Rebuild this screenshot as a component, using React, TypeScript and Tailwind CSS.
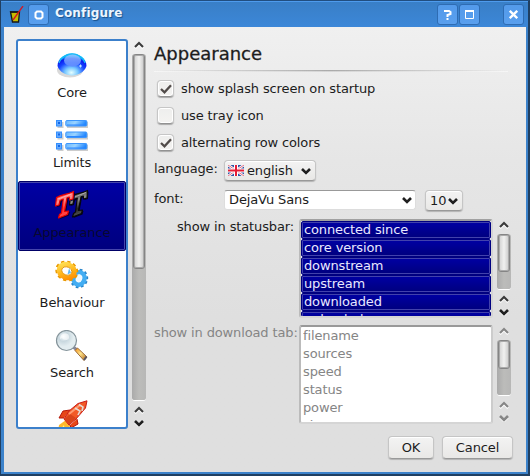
import React from 'react';

function Chevron({ up = false, dim = false }: { up?: boolean; dim?: boolean }) {
  return (
    <svg width="12" height="8" viewBox="0 0 12 8" fill="none" className="shrink-0">
      <path d={up ? 'M2 7.2L6 3.2L10 7.2' : 'M2 3.2L6 7.2L10 3.2'} stroke="#fff" strokeWidth="2.2" />
      <path d={up ? 'M2 6L6 2L10 6' : 'M2 2L6 6L10 2'} stroke={dim ? '#868686' : up ? '#3b3b3b' : '#202020'} strokeWidth={up ? 2.1 : 2.6} />
    </svg>
  );
}

function CoreIcon() {
  return (
    <svg width="32" height="32" viewBox="0 0 32 32">
      <defs>
        <radialGradient id="orb" cx=".48" cy=".87" r=".75">
          <stop offset="0" stopColor="#e6ffff" />
          <stop offset=".3" stopColor="#78c8ff" />
          <stop offset=".62" stopColor="#1747ff" />
          <stop offset=".85" stopColor="#0a1cf0" />
          <stop offset="1" stopColor="#00bfff" />
        </radialGradient>
        <linearGradient id="gloss" x2="0" y2="1">
          <stop stopColor="#9ac4ff" />
          <stop offset="1" stopColor="#5f88ff" />
        </linearGradient>
      </defs>
      <ellipse cx="14" cy="20" rx="13" ry="7.5" fill="#d9d9d9" />
      <path d="M1.5 16C1.5 8 9 3.4 16 3.4S30.500 8 30.500 16C28.500 22 22 25.500 16 25.500S3.500 22 1.500 16Z" fill="url(#orb)" />
      <path d="M3 13C5 7 11 4 16 4S27 7 29 13" fill="none" stroke="#18b9f6" strokeWidth="1.3" />
      <ellipse cx="16.500" cy="10.500" rx="8.500" ry="6" fill="url(#gloss)" opacity=".85" />
      <path d="M24.500 14.500v3M23 16h3" stroke="#bfe7ff" />
    </svg>
  );
}

function LimitsIcon() {
  return (
    <svg width="32" height="32" viewBox="0 0 32 32">
      <defs>
        <linearGradient id="bar" x2="1" y2=".2">
          <stop stopColor="#68b6ff" />
          <stop offset=".5" stopColor="#9bd4ff" />
          <stop offset="1" stopColor="#2388ff" />
        </linearGradient>
      </defs>
      {[1, 12.5, 24].map((y) => (
        <g key={y}>
          <rect x="1.5" y={y + 1} width="6" height="6" fill="#ccc" />
          <rect x="11" y={y + 1} width="21" height="6" fill="#ccc" />
          <rect x=".5" y={y - 0.5} width="5" height="5.5" fill="#64aaff" stroke="#338fff" />
          <rect x="2" y={y + 1} width="2" height="2" fill="#1268e8" />
          <rect x="9.8" y={y - 0.5} width="21" height="5.5" rx="1" fill="url(#bar)" stroke="#3c96fc" />
          <path d={`M11 ${y + 4}h18`} stroke="#2c87ff" />
        </g>
      ))}
    </svg>
  );
}

const letterT = 'M1 6.500C6 3.500 12 3.500 18 0.500L17.500 8L14 9L13.800 6L11.500 6.800L9 20.500L13 20L12 23.500L3 27L4 23.500L6 22L7.800 8L4.500 9.500L3.500 14L0 15Z';

function FontIcon() {
  return (
    <svg width="34" height="32" viewBox="0 0 34 32" className="overflow-visible">
      <defs>
        <linearGradient id="redT" x2=".3" y2="1">
          <stop stopColor="#f00" />
          <stop offset=".4" stopColor="#ff8c8c" />
          <stop offset=".7" stopColor="#f33" />
          <stop offset="1" stopColor="#ff4a4a" />
        </linearGradient>
        <linearGradient id="blackT" x2=".3" y2="1">
          <stop stopColor="#151515" />
          <stop offset=".45" stopColor="#8a8a8a" />
          <stop offset=".75" stopColor="#252525" />
          <stop offset="1" stopColor="#555" />
        </linearGradient>
      </defs>
      <g strokeLinejoin="round">
        <path transform="translate(15.500 1)" d={letterT} fill="#000020" />
        <path transform="translate(14.500 0)" d={letterT} fill="url(#blackT)" stroke="#080808" strokeWidth="1.2" />
        <path d="M17 8L31 2.500" stroke="#aaa" strokeWidth="1" />
        <path transform="translate(2 2)" d={letterT} fill="#000038" />
        <path transform="translate(.500 1)" d={letterT} fill="url(#redT)" stroke="#e80000" strokeWidth="1.2" />
        <path d="M3 9L16.500 4" stroke="#ffaaaa" strokeWidth="1.3" />
      </g>
    </svg>
  );
}

function GearIcon() {
  return (
    <svg width="34" height="32" viewBox="0 0 34 32">
      <defs>
        <linearGradient id="gold" x2="1" y2="1">
          <stop stopColor="#ffe258" />
          <stop offset=".55" stopColor="#ffb51b" />
          <stop offset="1" stopColor="#ff8a00" />
        </linearGradient>
      </defs>
      <g transform="translate(24 18.500) rotate(20)">
        <ellipse rx="7.600" ry="8.300" fill="none" stroke="#2885cb" strokeWidth="3" strokeDasharray="2.600 2.400" />
        <ellipse rx="5.500" ry="6.200" fill="none" stroke="#43adf2" strokeWidth="4.500" />
      </g>
      <ellipse cx="24" cy="18" rx="2.800" ry="3.800" fill="#eef8ff" />
      <g transform="translate(11.800 11) rotate(22)">
        <ellipse rx="10.200" ry="8.700" fill="none" stroke="#e99800" strokeWidth="3" strokeDasharray="3.200 2.700" />
        <ellipse rx="7.800" ry="6.500" fill="#fff" stroke="url(#gold)" strokeWidth="5" />
        <ellipse rx="5.200" ry="4" fill="#fff" stroke="#dc8b00" strokeWidth=".8" />
        <path d="M1 -3.500L4.500 0L2 3Z" fill="#5bb8f5" />
      </g>
    </svg>
  );
}

function SearchIcon() {
  return (
    <svg width="34" height="32" viewBox="0 0 34 32">
      <defs>
        <radialGradient id="lens" cx=".35" cy=".3">
          <stop stopColor="#fafdff" />
          <stop offset=".5" stopColor="#c9d8df" />
          <stop offset="1" stopColor="#e3edf0" />
        </radialGradient>
        <linearGradient id="handle" x2="1" y2="1">
          <stop stopColor="#f28c12" />
          <stop offset=".45" stopColor="#ffe38a" />
          <stop offset="1" stopColor="#a95c10" />
        </linearGradient>
      </defs>
      <path d="M17 16L22 20" stroke="#889" strokeWidth="3" />
      <circle cx="11.500" cy="10.500" r="10" fill="url(#lens)" stroke="#84939a" strokeWidth="1.2" />
      <path d="M5 9C5 3 13 2 14 6C15 12 8 10 7 8" fill="#fff" opacity=".6" />
      <path d="M22.500 18L32 27L29 30.500L20 20.500Z" fill="url(#handle)" stroke="#9c6b39" />
      <path d="M31.500 26.500L29 30" stroke="#556" strokeWidth="2" />
    </svg>
  );
}

function RocketIcon() {
  return (
    <svg width="32" height="32" viewBox="0 0 32 32">
      <path d="M10 20L3 25L2 32H13L14 25Z" fill="#ffb92c" />
      <path d="M8 25L4 30V32H9Z" fill="#ffff82" />
      <path d="M14 10L7 11L3 18L8 18M21 19L22 24L15 28L14 25" fill="#e74718" stroke="#b5180b" />
      <path d="M8 19L13 11L22 3.500L31 .800L29.500 8L20 19L13 25Z" fill="#f25a27" stroke="#c91d18" />
      <path d="M8.500 19L14 14L20 18L13 24.500Z" fill="#d9441a" />
      <path d="M13 14L24 5" stroke="#ff9a71" strokeWidth="2" />
      <path d="M19 8L24 11L22 15M23 4.500L27 7L26 11" fill="none" stroke="#e4d9d2" strokeWidth="1.6" />
    </svg>
  );
}

function SideItem({ icon, label, selected = false }: { icon: React.ReactNode; label?: string; selected?: boolean }) {
  return (
    <div className={`flex h-[70px] shrink-0 flex-col items-center rounded-[2px] ${selected ? 'border border-[#000066] bg-linear-to-b from-[#0000a4] to-[#00007e] pt-2 text-[#080830] shadow-[inset_0_0_0_1px_#4646ac]' : 'pt-[9px]'}`}>
      <div className="flex h-8 w-[34px] justify-center">{icon}</div>
      {label && <span className="mt-[3px] leading-4">{label}</span>}
    </div>
  );
}

function Thumb({ className }: { className: string }) {
  return <div className={`mx-px shrink-0 rounded-[3px] border border-[#858585] bg-linear-to-r from-[#d0d0d0] via-[#f1f1f0] to-[#c8c8c8] shadow-[inset_0_0_0_1px_#aaa] ${className}`} />;
}

function Scroll({ thumb, dim = false, className }: { thumb: string; dim?: boolean; className: string }) {
  return (
    <div className={`flex w-[14px] shrink-0 flex-col items-center ${className}`}>
      <Chevron up dim={dim} />
      <div className="mt-[5px] w-full flex-1 rounded-[3px] border-b border-white bg-linear-to-r from-[#aaa] via-[#bcbcba] to-[#b7b7b6]">
        <Thumb className={thumb} />
      </div>
      <div className="mt-[5px] flex flex-col gap-[5px]">
        <Chevron up dim={dim} />
        <Chevron dim={dim} />
      </div>
    </div>
  );
}

function Check({ label, checked = false }: { label: string; checked?: boolean }) {
  return (
    <div className="flex h-[27px] items-center">
      <div className="ml-[3px] flex h-[17px] w-[17px] items-center justify-center rounded-[4px] border border-[#c6c6c6] border-b-[#929292] bg-linear-to-b from-[#eeeeed] to-[#f4f3f1] shadow-[inset_0_0_0_1px_#fff,0_1px_1px_#aaa]">
        {checked && (
          <svg width="14" height="14" viewBox="0 0 14 14" fill="none">
            <path d="M2 7L5.500 10.300L12 3.300" stroke="#514b49" strokeWidth="2.3" />
          </svg>
        )}
      </div>
      <span className="ml-[7px] leading-4">{label}</span>
    </div>
  );
}

const raised = 'rounded-[4px] border border-[#c5c5c5] border-b-[#999] bg-linear-to-b from-[#f3f3f3] to-[#e9e8e6] shadow-[inset_0_1px_0_#fff,0_1px_1px_#b3b3b3]';
const titleButton = 'flex h-[21px] w-[21px] items-center justify-center rounded-[3px] border border-[#2e6cb3] bg-linear-to-b from-[#539aea] to-[#599fee] text-white';

export default function App() {
  return (
    <div className="flex h-[476px] w-[530px] flex-col overflow-hidden border border-r-2 border-b-2 border-[#203f61] border-t-[#214e80] bg-[#3c82ca] font-['DejaVu_Sans','Liberation_Sans',sans-serif] text-[13px] tracking-[-0.13px] text-[#1c1c1c]">
      <header className="flex h-[26px] shrink-0 items-start border-t border-[#4e9bed] bg-linear-to-b from-[#397fc7] to-[#3c87d8] pt-[2px]">
        <svg className="mt-[2px] ml-[8px]" width="15" height="18" viewBox="0 0 15 18">
          <path d="M1.500 6H10.500L9.500 16H3.500Z" fill="#c5bb00" stroke="#171717" strokeWidth="1.3" />
          <path d="M1 6h10" stroke="#171717" strokeWidth="1.3" />
          <path d="M4 14L14 0" stroke="#d51822" strokeWidth="1.3" />
        </svg>
        <div className={`${titleButton} ml-[4px]`}>
          <svg width="10" height="10" viewBox="0 0 10 10" fill="none"><path d="M3 1.500H7L8.500 3V7L7 8.500H3L1.500 7V3Z" stroke="#fff" strokeWidth="2" /></svg>
        </div>
        <span className="ml-[6px] text-[12px] leading-[18px] font-bold tracking-[0.15px] text-[#edf5ff] [text-shadow:1px_1px_1px_#174f89]">Configure</span>
        <div className="mr-[4px] ml-auto flex">
          <div className={titleButton}>
            <svg width="9" height="11" viewBox="0 0 9 11" fill="none"><path d="M1 2H6L7.500 3V5L4.500 6V8M4.500 9V11" stroke="#fff" strokeWidth="2" /></svg>
          </div>
          <div className={`${titleButton} ml-px`}>
            <svg width="9" height="9" viewBox="0 0 9 9"><path d="M.500 1H8.500V8.500H.500Z" fill="none" stroke="#fff" /><path d="M0 1h9" stroke="#fff" strokeWidth="2" /></svg>
          </div>
          <div className={`${titleButton} ml-[23px]`}>
            <svg width="9" height="9" viewBox="0 0 9 9"><path d="M.800 .800L8.200 8.200M8.200 .800L.800 8.200" stroke="#fff" strokeWidth="2.3" /></svg>
          </div>
        </div>
      </header>
      <main className="mr-[2px] ml-[3px] flex h-[445px] shrink-0 bg-linear-to-b from-[#f0f0f0] via-[#e6e6e6] via-30% to-[#dfdfdf] to-65% pl-3">
        <aside className="mt-3 flex h-[390px] w-[112px] shrink-0 flex-col overflow-hidden rounded-[3px] border-2 border-[#3c80cb] bg-white">
          <SideItem icon={<CoreIcon />} label="Core" />
          <SideItem icon={<LimitsIcon />} label="Limits" />
          <SideItem icon={<FontIcon />} label="Appearance" selected />
          <SideItem icon={<GearIcon />} label="Behaviour" />
          <SideItem icon={<SearchIcon />} label="Search" />
          <SideItem icon={<RocketIcon />} />
        </aside>
        <Scroll className="mt-[14px] ml-1 h-[386px]" thumb="h-[215px]" />
        <section className="ml-2 flex w-[359px] flex-col">
          <h1 className="mt-[15px] h-[24px] text-[18px] leading-6 tracking-normal [-webkit-text-stroke:0.3px_#1c1c1c]">Appearance</h1>
          <div className="mt-[4px] mb-[3px] h-[2px] w-[354px] border-b border-white/50 bg-linear-to-r from-transparent via-[#aaa] to-transparent" />
          <Check label="show splash screen on startup" checked />
          <Check label="use tray icon" />
          <Check label="alternating row colors" checked />
          <div className="mt-[4px] flex h-[22px]">
            <span className="w-[70px] leading-[18px]">language:</span>
            <div className={`flex h-[21px] w-[92px] items-center pl-[3px] ${raised}`}>
              <svg width="16" height="11" viewBox="0 0 16 11">
                <rect width="16" height="11" fill="#3153a3" />
                <path d="M0 0L16 11M16 0L0 11" stroke="#fff" strokeWidth="2.6" />
                <path d="M0 0L16 11M16 0L0 11" stroke="#d84560" strokeWidth=".8" />
                <path d="M8 0V11M0 5.500H16" stroke="#fff" strokeWidth="4" />
                <path d="M8 0V11M0 5.500H16" stroke="#e51b35" strokeWidth="2" />
              </svg>
              <span className="ml-[3px] leading-4">english</span>
              <span className="mr-[3px] ml-auto"><Chevron /></span>
            </div>
          </div>
          <div className="mt-[8px] flex h-[22px]">
            <span className="w-[70px] leading-[18px]">font:</span>
            <div className="flex h-[20px] w-[192px] items-center rounded-[3px] border border-[#ddd] border-t-[#999] bg-white pl-1">
              <span className="leading-4">DejaVu Sans</span>
              <span className="mr-[2px] ml-auto"><Chevron /></span>
            </div>
            <div className={`ml-[9px] flex h-[21px] w-[38px] items-center pl-1 ${raised}`}>
              <span className="leading-4">10</span>
              <span className="mr-[3px] ml-auto"><Chevron /></span>
            </div>
          </div>
          <div className="mt-[7px] flex">
            <span className="w-[145px] pr-[5px] text-right leading-4 whitespace-nowrap">show in statusbar:</span>
            <div className="flex h-[99px] w-[194px] flex-col overflow-hidden rounded-[3px] border-2 border-t-[#a1a1a1] border-r-[#d4d4d4] border-b-[#d5d5d5] border-l-[#bbb] bg-white text-[#e8e8ff]">
              {['connected since', 'core version', 'downstream', 'upstream', 'downloaded', 'uploaded'].map((name) => (
                <div key={name} className="h-[18px] shrink-0 rounded-[2px] border border-[#000080] bg-linear-to-b from-[#0000a4] to-[#00007e] pl-[2px] leading-4 shadow-[inset_0_0_0_1px_#4242ac]">{name}</div>
              ))}
            </div>
            <Scroll className="mt-[2px] ml-1 h-[95px]" thumb="h-[38px]" />
          </div>
          <div className="mt-[7px] flex text-[#858585]">
            <span className="w-[145px] pr-[5px] text-right leading-4 whitespace-nowrap">show in download tab:</span>
            <div className="h-[99px] w-[194px] overflow-hidden rounded-[3px] border-2 border-t-[#999] border-r-[#ccc] border-b-[#d5d5d5] border-l-[#bbb] bg-white pl-[2px]">
              <div className="h-[94px] overflow-hidden">
                {['filename', 'sources', 'speed', 'status', 'power', 'size'].map((name) => (
                  <div key={name} className="h-[18px] leading-[17px]">{name}</div>
                ))}
              </div>
            </div>
            <Scroll className="mt-[2px] ml-1 h-[95px]" thumb="h-[29px]" dim />
          </div>
          <div className="mt-[12px] flex justify-end gap-[8px]">
            <button className={`h-[23px] w-[46px] leading-5 ${raised}`}>OK</button>
            <button className={`h-[23px] w-[71px] leading-5 ${raised}`}>Cancel</button>
          </div>
        </section>
      </main>
    </div>
  );
}
